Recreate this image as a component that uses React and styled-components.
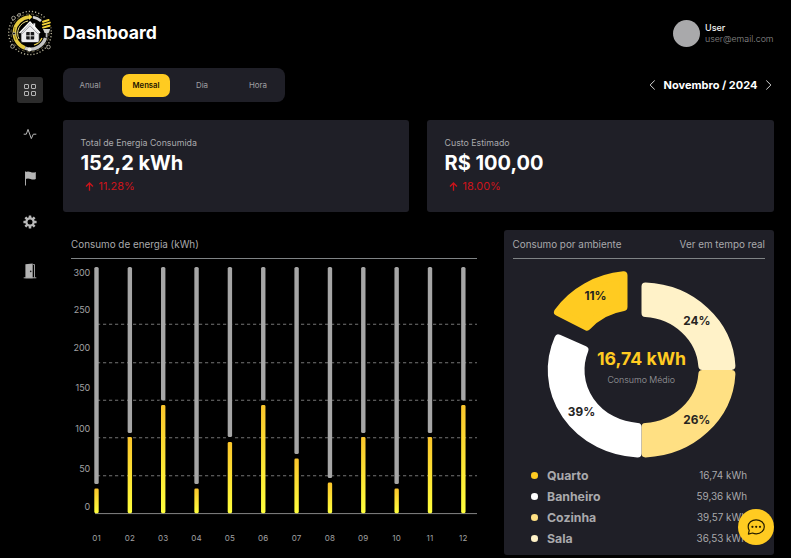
import React from "react";
import styled, { createGlobalStyle } from "styled-components";

const Global = createGlobalStyle`
  * { box-sizing: border-box; }
  body { margin: 0; background: #000; font-family: Inter, "Liberation Sans", sans-serif; color: #fff; overflow: hidden; }
`;

const Page = styled.div`
  position: relative;
  display: grid;
  grid-template-columns: 63px 711px;
  width: 791px;
  height: 558px;
  overflow: hidden;
  background: #000;
`;
const Sidebar = styled.aside`
  display: flex;
  flex-direction: column;
  padding: 9px 0 0 7px;
`;
const Nav = styled.nav`
  display: flex;
  flex-direction: column;
  align-items: center;
  width: 26px;
  margin: 20px 0 0 10px;
`;
const NavItem = styled.div`
  display: flex;
  align-items: center;
  justify-content: center;
  width: 26px;
  height: 26px;
  border-radius: 3px;
  margin-bottom: ${(p) => p.$gap || 0}px;
  background: ${(p) => (p.$active ? "#2c2c2c" : "transparent")};
  svg { display: block; }
`;
const Main = styled.main`
  display: flex;
  flex-direction: column;
`;
const Header = styled.header`
  display: flex;
  align-items: center;
  justify-content: space-between;
  height: 68px;
`;
const Title = styled.h1`
  margin: 0 0 2px;
  font-size: 17.6px;
  line-height: 22px;
  font-weight: 700;
`;
const User = styled.div`
  display: flex;
  align-items: center;
  gap: 5px;
  width: 101px;
  margin-bottom: 2px;
  white-space: nowrap;
`;
const Avatar = styled.div`
  flex: none;
  width: 27px;
  height: 27px;
  border-radius: 50%;
  background: #a9a9ab;
`;
const UserName = styled.div`
  font-size: 9px;
  line-height: 11px;
  font-weight: 500;
  color: #f2f2f2;
`;
const UserMail = styled.div`
  font-size: 8.8px;
  line-height: 11px;
  font-weight: 300;
  color: #909090;
`;
const Toolbar = styled.div`
  display: flex;
  align-items: center;
  justify-content: space-between;
  height: 34px;
`;
const Tabs = styled.div`
  display: flex;
  align-items: center;
  width: 222px;
  height: 34px;
  padding-left: 3px;
  border-radius: 8px;
  background: #1f1f27;
`;
const Tab = styled.div`
  display: flex;
  align-items: center;
  justify-content: center;
  width: 48px;
  height: 23px;
  margin-right: ${(p) => p.$gap || 0}px;
  border-radius: 7px;
  font-size: ${(p) => (p.$active ? 7.7 : 7.9)}px;
  background: ${(p) => (p.$active ? "#ffcb21" : "transparent")};
  color: ${(p) => (p.$active ? "#1b1500" : "#a0a0a3")};
  font-weight: ${(p) => (p.$active ? 600 : 400)};
`;
const Period = styled.div`
  display: flex;
  align-items: center;
  justify-content: space-between;
  width: 123px;
  margin-right: 2px;
  font-size: 11px;
  font-weight: 700;
  svg { display: block; }
`;
const Stats = styled.section`
  display: grid;
  grid-template-columns: 346px 347px;
  gap: 18px;
  margin-top: 18px;
`;
const StatCard = styled.article`
  height: 92px;
  padding: 17px 17.5px 0;
  border-radius: 3px;
  background: #1f1f27;
`;
const StatLabel = styled.div`
  font-size: 8.8px;
  line-height: 12px;
  color: #a9a9ac;
`;
const StatValue = styled.div`
  font-size: 20px;
  line-height: 24px;
  margin-top: 2px;
  font-weight: 700;
`;
const StatChange = styled.div`
  display: flex;
  align-items: center;
  gap: 5px;
  margin: 4px 0 0 4px;
  font-size: 10.9px;
  line-height: 14px;
  font-weight: 400;
  color: #cc141b;
`;
const Panels = styled.section`
  display: flex;
  justify-content: space-between;
  margin-top: 18px;
`;
const ChartPanel = styled.article`
  width: 414px;
  padding-left: 8px;
`;
const RoomPanel = styled.article`
  width: 270.5px;
  height: 325px;
  padding: 0 9px;
  border-radius: 3px;
  background: #1f1f27;
`;
const PanelHead = styled.div`
  display: flex;
  justify-content: space-between;
  height: 29px;
  padding: 8px 0 0;
  border-bottom: 1px solid #7f8385;
  font-size: 9.9px;
  line-height: 13px;
  color: #a9a9ac;
`;
const ChartSvg = styled.svg`
  display: block;
  text { font-family: Inter, sans-serif; font-weight: 400; }
`;
const DonutSvg = styled.svg`
  display: block;
  text { font-family: Inter, sans-serif; text-anchor: middle; }
`;
const Legend = styled.ul`
  margin: 5px 18px 0;
  padding: 0;
  list-style: none;
`;
const LegendRow = styled.li`
  display: flex;
  align-items: center;
  height: 20.9px;
`;
const Dot = styled.span`
  width: 7.5px;
  height: 7px;
  margin-right: 9px;
  border-radius: 50%;
  background: ${(p) => p.$color};
`;
const Room = styled.span`
  flex: 1;
  font-size: 12.3px;
  font-weight: 700;
  color: #a9a9ac;
`;
const Usage = styled.span`
  font-size: 9.9px;
  color: #a9a9ac;
`;
const ChatButton = styled.button`
  position: absolute;
  right: 17px;
  bottom: 13px;
  display: flex;
  align-items: center;
  justify-content: center;
  width: 36px;
  height: 36px;
  padding: 0;
  border: 0;
  border-radius: 50%;
  background: #ffcb21;
`;

const Logo = () => (
  <svg width="46" height="48" viewBox="0 0 46 48" fill="none">
    <ellipse cx="23" cy="24" rx="21.3" ry="21.6" stroke="#b5b097" strokeWidth="1.4" strokeDasharray="1.2 2" />
    <circle cx="23" cy="24" r="19" stroke="#6e6845" strokeWidth=".9" strokeDasharray="3 2" />
    <path d="M22 8A16 16 0 0 0 18 39" stroke="#e3c93f" strokeWidth="3.6" />
    <path d="M21 12A12.5 12.5 0 0 0 12 30" stroke="#f5e58c" strokeWidth="1" />
    <path d="M8 18A16 16 0 0 0 9 31" stroke="#8f7c22" strokeWidth="1" />
    <path d="M18 39.2A16 16 0 0 0 38.5 29" stroke="#c4c4c4" strokeWidth="3.4" />
    <path d="M26 8.2A16 16 0 0 1 34 12" stroke="#d0d0d0" strokeWidth="2.8" />
    <path d="M27 36A13 13 0 0 0 35 29" stroke="#eed44d" strokeWidth="1.3" />
    <g fill="#000" stroke="#bdb9aa" strokeWidth=".8">
      <circle cx="6.5" cy="9" r="1.8" />
      <circle cx="12" cy="6" r="1.4" />
      <circle cx="5.5" cy="37.5" r="1.8" />
      <circle cx="41.5" cy="38" r="1.8" />
      <circle cx="7" cy="24.5" r="1.3" />
    </g>
    <circle cx="22.5" cy="40.6" r="2" fill="#f3f3e9" />
    <path d="M22 5l3.5 3-3.5 3z" fill="#f2d94b" />
    <path d="M35 9l1 11h7.5l1-11z" fill="#000" />
    <path d="M36 12.7l5.6-1.7M35.8 15.6l7-2M36 18.6l6.6-1.8" stroke="#f4d338" strokeWidth="2" strokeLinecap="round" />
    <path d="M36 20h7.2l-1.6 4h-4z" fill="#d2d2ce" />
    <path d="M39.6 24v4.5" stroke="#b9b9b9" strokeWidth="1.8" />
    <path d="M14 23.5L23 14l3 3v-3h2.5v5.5l3.7 4V32q0 1.5-2 1.5H16q-2 0-2-1.5z" fill="#ececef" stroke="#111" strokeWidth=".7" />
    <path d="M12.5 24L23 13.2 33 24" stroke="#fff" strokeWidth="1.5" />
    <path d="M14.8 25L23 16.8l8 8.2" stroke="#77777d" strokeWidth=".7" />
    <rect x="19.2" y="23" width="8" height="7.5" rx=".8" fill="#17171a" />
    <path d="M23.2 23v7.5M19.2 26.8h8" stroke="#eee" strokeWidth=".9" />
  </svg>
);

const GridIcon = () => (
  <svg width="14" height="14" viewBox="0 0 14 14" fill="none" stroke="#b4b4b4" strokeWidth="1">
    <rect x="1.5" y="1.5" width="4" height="4" rx=".3" />
    <rect x="8.5" y="1.5" width="4" height="4" rx=".3" />
    <rect x="1.5" y="8.5" width="4" height="4" rx=".3" />
    <rect x="8.5" y="8.5" width="4" height="4" rx=".3" />
  </svg>
);
const PulseIcon = () => (
  <svg width="14" height="12" viewBox="0 0 14 12" fill="none" stroke="#b8b8b8" strokeWidth="1" strokeLinejoin="round">
    <path d="M.7 6.2h2.6L5 1.4l3.3 9.2 2-4.4h3" />
  </svg>
);
const FlagIcon = () => (
  <svg width="14" height="16" viewBox="0 0 14 16">
    <path d="M2 1.5h1v14H2z" fill="#aaa" />
    <path d="M2.4 2q2.6-1 5.2 0t5.2 0v7q-2.6 1-5.2 0t-5.2 0z" fill="#b5b5b5" />
  </svg>
);
const GearIcon = () => (
  <svg width="14" height="14" viewBox="-7 -7 14 14">
    <g fill="#b9b9b9">
      {[0, 45, 90, 135].map((a) => (
        <rect key={a} x="-1.3" y="-6.6" width="2.6" height="13.2" rx=".4" transform={`rotate(${a})`} />
      ))}
      <circle r="4.7" />
    </g>
    <circle r="2.5" fill="#000" />
  </svg>
);
const DoorIcon = () => (
  <svg width="14" height="16" viewBox="0 0 14 16">
    <path d="M2.4 1.3L9.7.6v14.7H2.4z" fill="#b3b3b3" />
    <path d="M10.2 1.5h1.3v13" fill="none" stroke="#aaa" strokeWidth=".9" />
    <path d="M.7 14.8h12.6" stroke="#aaa" strokeWidth="1" />
    <circle cx="7.7" cy="8.4" r=".8" fill="#222" />
  </svg>
);
const Chevron = ({ right }) => (
  <svg width="7" height="10" viewBox="0 0 7 10" fill="none" stroke="#d5d5d5" strokeWidth="1">
    <path d={right ? "M1.3.5L5.9 5 1.3 9.5" : "M5.7.5L1.1 5l4.6 4.5"} />
  </svg>
);
const ArrowUp = () => (
  <svg width="9" height="9" viewBox="0 0 9 9" fill="none" stroke="currentColor" strokeWidth="1.3">
    <path d="M4.5 8.7V1M1 4.5L4.5 1 8 4.5" />
  </svg>
);
const ChatIcon = () => (
  <svg width="20" height="20" viewBox="0 0 20 20" fill="none" stroke="#241c00" strokeWidth="1.2" strokeLinejoin="round">
    <path d="M3.2 13.3A7.2 7.2 0 0 1 2.2 9.6C2.2 5.9 5.6 2.8 10.1 2.8S18.3 5.9 18.3 9.7 14.9 16.8 10.3 16.8a9 9 0 0 1-3.8-.8l-4.1 1.1z" />
    <g fill="#241c00" stroke="none">
      <circle cx="6.4" cy="9.8" r="1.1" />
      <circle cx="10.2" cy="9.8" r="1.1" />
      <circle cx="14" cy="9.8" r="1.1" />
    </g>
  </svg>
);

// Distance from the top of the plot: end of the grey track, start of the filled bar.
const months = [
  [225, 229.5], [174, 178], [141.5, 146], [225, 229.5], [178, 183], [141.5, 146],
  [195, 199.5], [219, 223.5], [174, 178], [225, 229.5], [174, 178], [141.5, 146],
];
const ticks = [[300, 14], [250, 51], [200, 88.5], [150, 129], [100, 169.5], [50, 210], [0, 248]];

const EnergyChart = () => (
  <ChartSvg width="406" height="299" viewBox="0 0 406 299">
    <defs>
      <linearGradient id="bar" x1="0" x2="0" y1="0" y2="1">
        <stop offset="0" stopColor="#fbc62c" />
        <stop offset="1" stopColor="#ffff3c" />
      </linearGradient>
    </defs>
    {[65.2, 103.7, 141.2, 178.8, 216.7].map((y) => (
      <path key={y} d={`M26 ${y}H406`} stroke="#747474" strokeWidth="1.1" strokeDasharray="3.2 2.8" />
    ))}
    <path d="M24 254.6H406" stroke="#858585" strokeWidth="1" />
    {months.map(([end, start], i) => {
      const x = 25.5 + i * 33.35;
      return (
        <g key={i}>
          <rect x={x - 4} y={end} width="8" height={start - end} fill="#000" />
          <rect x={x - 2.2} y="8" width="4.4" height={end - 8} rx="1.6" fill="#a6a6a6" />
          <rect x={x - 2.2} y={start} width="4.4" height={254.2 - start} rx="1.4" fill="url(#bar)" />
          <text x={x} y="282" textAnchor="middle" fontSize="8" fill="#a0a0a3" letterSpacing=".2">
            {String(i + 1).padStart(2, "0")}
          </text>
        </g>
      );
    })}
    {ticks.map(([n, y]) => (
      <text key={n} x="19.3" y={y + 3.2} textAnchor="end" fontSize="9" fill="#a0a0a3">{n}</text>
    ))}
  </ChartSvg>
);

const slices = [
  ["#fff2c8", "M645 286.6A90 83.5 0 0 1 730.9 366H701.85A61 57 0 0 0 645 313.1Z", "24%", 696.3, 321],
  ["#ffe083", "M730.9 374A90 83.5 0 0 1 645 453.4V426.9A61 57 0 0 0 701.85 374Z", "26%", 696.3, 420],
  ["#ffffff", "M637 453.4A90 83.5 0 0 1 557.9 338.5L583.9 350A61 57 0 0 0 637 426.9Z", "39%", 581, 411.5],
  ["#ffcb21", "M557.5 312A90 83.5 0 0 1 623 275.3V307A61 57 0 0 0 586.5 326.7Z", "11%", 595, 296],
];

const Donut = () => (
  <DonutSvg width="252.5" height="201" viewBox="512.5 259 252.5 201">
    {slices.map(([color, d, label, x, y]) => (
      <g key={label}>
        <path d={d} fill={color} stroke={color} strokeWidth="8" strokeLinejoin="round" />
        <text x={x} y={y + 4.3} fontSize="11.8" fontWeight="700" fill="#26241f">{label}</text>
      </g>
    ))}
    <text x="641" y="365" fontSize="17.7" fontWeight="700" fill="#ffcb21">16,74 kWh</text>
    <text x="640.7" y="383" fontSize="8.8" fontWeight="300" fill="#a0a0a3">Consumo Médio</text>
  </DonutSvg>
);

const rooms = [
  ["Quarto", "16,74 kWh", "#ffcb21"],
  ["Banheiro", "59,36 kWh", "#ffffff"],
  ["Cozinha", "39,57 kWh", "#ffe083"],
  ["Sala", "36,53 kWh", "#fff2c8"],
];

export default function App() {
  return (
    <>
      <Global />
      <Page>
        <Sidebar>
          <Logo />
          <Nav>
            <NavItem $active $gap={18}><GridIcon /></NavItem>
            <NavItem $gap={18}><PulseIcon /></NavItem>
            <NavItem $gap={18}><FlagIcon /></NavItem>
            <NavItem $gap={23}><GearIcon /></NavItem>
            <NavItem><DoorIcon /></NavItem>
          </Nav>
        </Sidebar>
        <Main>
          <Header>
            <Title>Dashboard</Title>
            <User>
              <Avatar />
              <div>
                <UserName>User</UserName>
                <UserMail>user@email.com</UserMail>
              </div>
            </User>
          </Header>
          <Toolbar>
            <Tabs>
              <Tab $gap={8}>Anual</Tab>
              <Tab $active $gap={8}>Mensal</Tab>
              <Tab $gap={8}>Dia</Tab>
              <Tab>Hora</Tab>
            </Tabs>
            <Period>
              <Chevron />
              <span>Novembro / 2024</span>
              <Chevron right />
            </Period>
          </Toolbar>
          <Stats>
            <StatCard>
              <StatLabel>Total de Energia Consumida</StatLabel>
              <StatValue>152,2 kWh</StatValue>
              <StatChange><ArrowUp />11.28%</StatChange>
            </StatCard>
            <StatCard>
              <StatLabel>Custo Estimado</StatLabel>
              <StatValue>R$ 100,00</StatValue>
              <StatChange><ArrowUp />18.00%</StatChange>
            </StatCard>
          </Stats>
          <Panels>
            <ChartPanel>
              <PanelHead><span>Consumo de energia (kWh)</span></PanelHead>
              <EnergyChart />
            </ChartPanel>
            <RoomPanel>
              <PanelHead>
                <span>Consumo por ambiente</span>
                <span>Ver em tempo real</span>
              </PanelHead>
              <Donut />
              <Legend>
                {rooms.map(([name, usage, color]) => (
                  <LegendRow key={name}>
                    <Dot $color={color} />
                    <Room>{name}</Room>
                    <Usage>{usage}</Usage>
                  </LegendRow>
                ))}
              </Legend>
            </RoomPanel>
          </Panels>
        </Main>
        <ChatButton aria-label="Chat"><ChatIcon /></ChatButton>
      </Page>
    </>
  );
}
